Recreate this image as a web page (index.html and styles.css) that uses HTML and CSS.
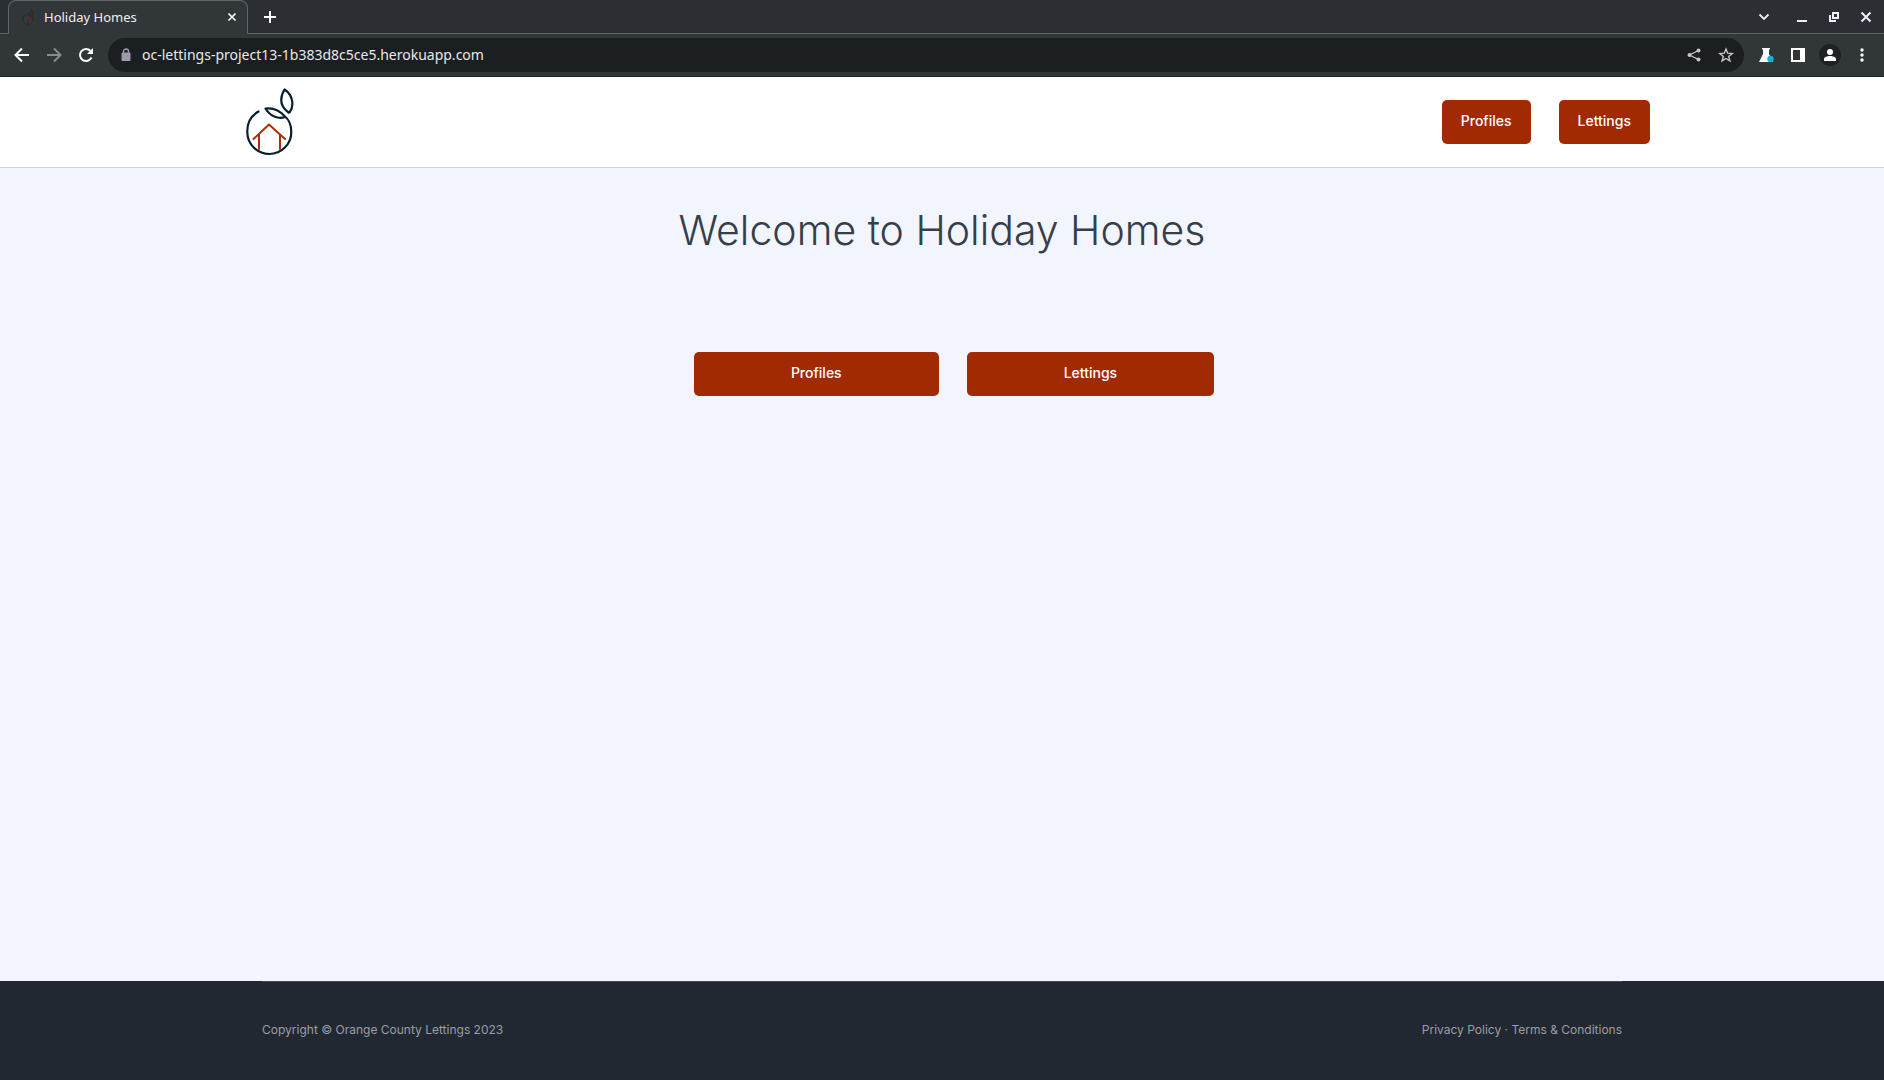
FILE: index.html
```html
<!DOCTYPE html>
<html lang="en">
<head>
<meta charset="utf-8">
<title>Holiday Homes</title>
<link rel="stylesheet" href="styles.css">
</head>
<body>
<svg class="defs" aria-hidden="true">
  <symbol id="logo" viewBox="0 -3 70 90">
    <g fill="none" stroke-linecap="round" stroke-linejoin="round">
      <path class="logo-ink" d="M22.500 31.500C15 36 11 43.500 11.300 52A22 22 0 0 0 55.300 52C55.300 45 53 39.500 48.500 36C43 30 37 27.500 29.500 28.500C34 36 42 39.500 49 37M52.500 32.500C45 27 43 19 48.500 9.500C57 15 58.500 26 53.500 32.500"/>
      <path class="logo-home" d="M17.500 59L33 44.500L49 59M23 55V69M44 55V69"/>
    </g>
  </symbol>
</svg>
<div class="window">
  <header class="browser">
    <div class="tabs">
      <div class="tab">
        <svg class="favicon" viewBox="9 10 50 70"><use href="#logo" width="70" height="90"/></svg>
        <span class="tab-title">Holiday Homes</span>
        <button class="icon-btn" aria-label="Close tab"><svg width="16" height="16" viewBox="0 0 16 16"><path d="M4.500 4.500l7 7m0-7l-7 7" stroke="#fff" stroke-width="1.700"/></svg></button>
      </div>
      <button class="icon-btn new-tab" aria-label="New tab"><svg width="16" height="16" viewBox="0 0 16 16"><path d="M8 2v12M2 8h12" stroke="#fff" stroke-width="2"/></svg></button>
      <div class="window-controls">
        <button class="icon-btn search-tabs" aria-label="Search tabs"><svg width="16" height="16" viewBox="0 0 16 16"><path d="M3.500 5.500L8 10l4.500-4.500" fill="none" stroke="#eee" stroke-width="1.800"/></svg></button>
        <button class="icon-btn" aria-label="Minimize"><svg width="16" height="16" viewBox="0 0 16 16"><path d="M3 12h10" stroke="#eef" stroke-width="2"/></svg></button>
        <button class="icon-btn" aria-label="Restore"><svg width="16" height="16" viewBox="0 0 16 16"><path d="M7 4h5v5H7zM4 6v6h6" fill="none" stroke="#eef" stroke-width="2"/></svg></button>
        <button class="icon-btn" aria-label="Close window"><svg width="16" height="16" viewBox="0 0 16 16"><path d="M3.500 3.500l9 9m0-9l-9 9" stroke="#eef" stroke-width="2"/></svg></button>
      </div>
    </div>
    <div class="toolbar">
      <div class="tools">
        <button class="icon-btn" aria-label="Back"><svg width="16" height="16" viewBox="0 0 16 16"><path d="M15 8H2M8 1.500L1.500 8L8 14.500" fill="none" stroke="#fff" stroke-width="2"/></svg></button>
        <button class="icon-btn" aria-label="Forward"><svg width="16" height="16" viewBox="0 0 16 16"><path d="M1 8h13M8 1.500L14.500 8L8 14.500" fill="none" stroke="#898c8e" stroke-width="2"/></svg></button>
        <button class="icon-btn" aria-label="Reload"><svg width="16" height="16" viewBox="0 0 16 16"><path d="M13.500 10.500A6 6 0 1 1 12.500 4" fill="none" stroke="#fff" stroke-width="2"/><path d="M15 1v6H9z" fill="#fff"/></svg></button>
      </div>
      <div class="address">
        <svg width="10" height="14" viewBox="0 0 10 14"><path d="M1 5h8v7.500H1z" fill="#9a9da7" stroke="#9a9da7"/><path d="M2.500 5V3.500a2.500 2.500 0 0 1 5 0V5" fill="none" stroke="#9a9da7" stroke-width="1.400"/></svg>
        <input class="url" type="text" aria-label="Address" value="oc-lettings-project13-1b383d8c5ce5.herokuapp.com">
        <button class="icon-btn" aria-label="Share"><svg width="16" height="16" viewBox="0 0 16 16"><path d="M12.500 3.500L3.500 8l9 4.500" fill="none" stroke="#c4c6c8" stroke-width="1.300"/><g fill="#c4c6c8"><circle cx="12.500" cy="3.500" r="2"/><circle cx="3.500" cy="8" r="2"/><circle cx="12.500" cy="12.500" r="2"/></g></svg></button>
        <button class="icon-btn" aria-label="Bookmark"><svg width="16" height="16" viewBox="0 0 16 16"><path d="M8 2l1.700 4.200 4.500.3-3.500 2.900 1.200 4.500L8 11.500l-3.900 2.400 1.200-4.500L1.800 6.500l4.500-.3z" fill="none" stroke="#c4c6c8" stroke-width="1.400"/></svg></button>
      </div>
      <div class="tools">
        <button class="icon-btn" aria-label="Labs"><svg width="16" height="16" viewBox="0 0 16 16"><path d="M4 1h8v1.500h-1V7l4 8H1l4-8V2.500H4z" fill="#fff"/><circle cx="12.500" cy="12" r="3.200" fill="#10b2ce"/></svg></button>
        <button class="icon-btn" aria-label="Side panel"><svg width="16" height="16" viewBox="0 0 16 16"><path d="M1 1h14v14H1zM3 3v10h7V3z" fill="#fff" fill-rule="evenodd"/></svg></button>
        <button class="icon-btn" aria-label="Account"><svg width="22" height="22" viewBox="0 0 22 22"><circle cx="11" cy="11" r="11" fill="#1f2124"/><circle cx="11" cy="8" r="3" fill="#fff"/><path d="M5 17v-2c0-4 12-4 12 0v2z" fill="#fff"/></svg></button>
        <button class="icon-btn" aria-label="Menu"><svg width="16" height="16" viewBox="0 0 16 16" fill="#fff"><circle cx="8" cy="3" r="1.700"/><circle cx="8" cy="8" r="1.700"/><circle cx="8" cy="13" r="1.700"/></svg></button>
      </div>
    </div>
  </header>
  <div class="page">
    <div class="site-header">
      <nav class="nav">
        <a href="#" aria-label="Home"><svg class="logo" width="70" height="90"><use href="#logo"/></svg></a>
        <div class="nav-links"><a class="btn" href="#">Profiles</a><a class="btn" href="#">Lettings</a></div>
      </nav>
    </div>
    <main class="main">
      <h1 class="title">Welcome to Holiday Homes</h1>
      <div class="actions"><a class="btn wide" href="#">Profiles</a><a class="btn wide" href="#">Lettings</a></div>
    </main>
    <footer class="footer">
      <div class="footer-inner">
        <span>Copyright © Orange County Lettings 2023</span>
        <span><a href="#">Privacy Policy</a> · <a href="#">Terms &amp; Conditions</a></span>
      </div>
    </footer>
  </div>
</div>
</body>
</html>
```
FILE: styles.css
```css
* { box-sizing: border-box; }
body { margin: 0; font-family: Inter, "Open Sans", sans-serif; }
a { color: inherit; text-decoration: none; }
svg { display: block; flex: none; }
.defs { position: absolute; width: 0; height: 0; }
.logo-ink { stroke: #08202d; stroke-width: 2.200; }
.logo-home { stroke: #ab2f08; stroke-width: 2; }
.window { min-height: 100vh; display: flex; flex-direction: column; }

.browser { background: #313639; font-family: "Noto Sans", sans-serif; color: #eee; border-bottom: 1px solid #202124; }
.icon-btn { display: flex; align-items: center; justify-content: center; width: 16px; height: 16px; padding: 0; border: 0; background: none; flex: none; }
.tabs { display: flex; align-items: center; height: 34px; padding: 0 10px 0 8px; background: #2b2e32; border-bottom: 1px solid #606467; }
.tab { display: flex; align-items: center; align-self: flex-start; width: 240px; height: 34px; padding: 0 7px 1px 11px; background: #313639; border: 1px solid #606467; border-bottom: 0; border-radius: 8px 8px 0 0; }
.favicon { width: 16px; height: 16px; margin-right: 8px; opacity: .8; }
.tab-title { flex: 1; font-size: 13px; line-height: 18px; }
.new-tab { margin-left: 14px; }
.window-controls { display: flex; gap: 16px; margin-left: auto; }
.search-tabs { margin-right: 6px; }
.toolbar { display: flex; align-items: center; gap: 14px; height: 42px; padding: 0 14px; }
.tools { display: flex; align-items: center; gap: 16px; }
.address { flex: 1; display: flex; align-items: center; gap: 16px; height: 34px; padding: 0 10px 0 13px; border-radius: 17px; background: #1b1f21; }
.url { flex: 1; min-width: 0; margin-left: -5px; padding: 0; border: 0; background: none; color: #e8e8e8; font: 14px/20px "Noto Sans", sans-serif; }

.page { flex: 1; display: flex; flex-direction: column; background: #f2f5fe; }
.site-header { background: #fff; border-bottom: 1px solid #d0d3e0; }
.nav { display: flex; align-items: center; justify-content: space-between; max-width: 1440px; margin: 0 auto; padding: 0 12px 0 14px; }
.nav-links { display: flex; gap: 28px; }
.btn { height: 44px; padding: 0 19px; border-radius: 5px; background: #a12a03; color: #fff; font-size: 14px; line-height: 42px; font-weight: 500; text-align: center; }
.main { flex: 1; }
.title { margin: 36px 0 0; font-size: 41px; line-height: 52px; font-weight: 300; text-align: center; color: #363f49; }
.actions { display: flex; justify-content: center; gap: 28px; margin-top: 96px; padding-left: 24px; }
.wide { padding: 0 97px; }
.footer { background: #212832; color: #9b9ea5; font-size: 12px; }
.footer-inner { display: flex; justify-content: space-between; align-items: center; max-width: 1360px; height: 99px; margin: 0 auto; padding-bottom: 4px; border-top: 1px solid #484d55; }
```
